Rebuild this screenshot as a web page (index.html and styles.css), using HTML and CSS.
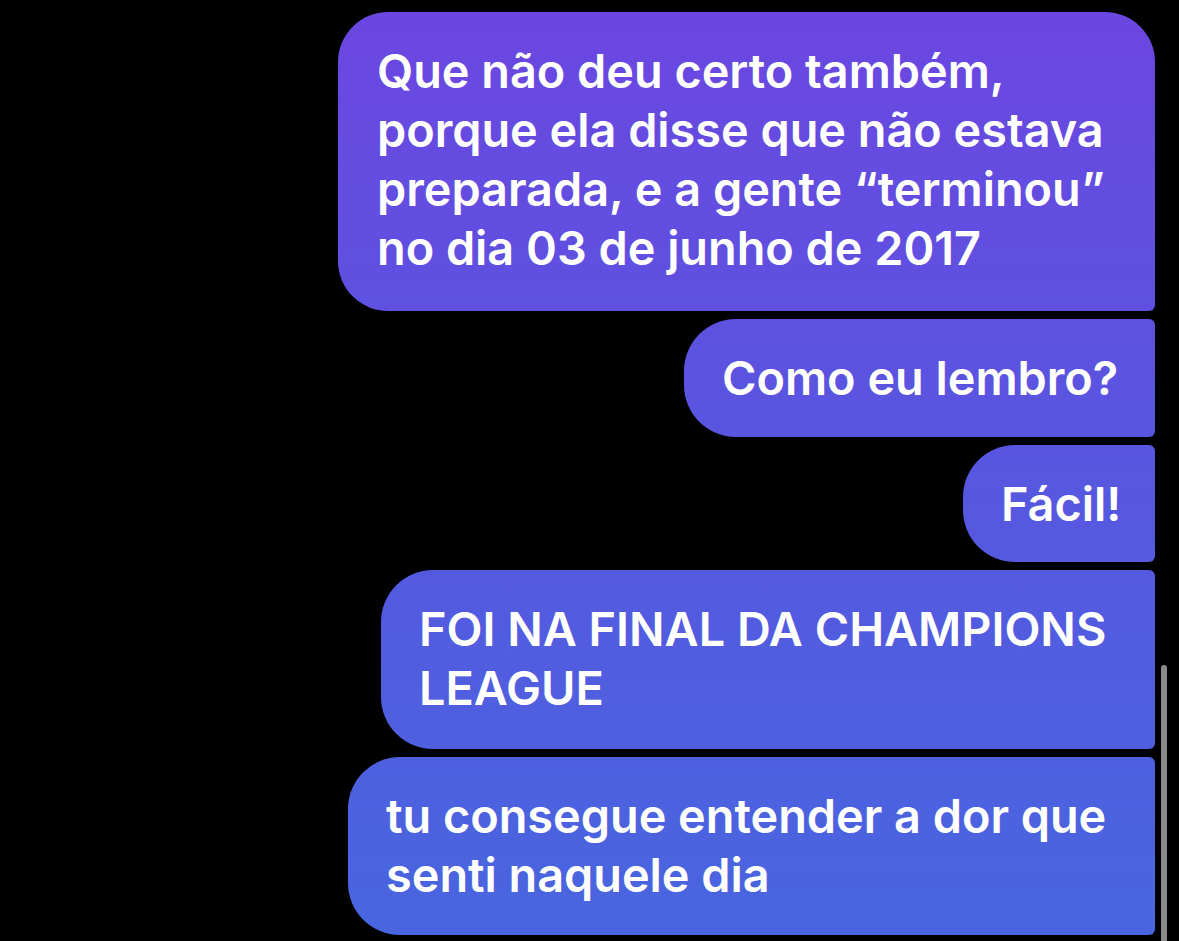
FILE: index.html
```html
<!DOCTYPE html>
<html lang="pt">
<head>
<meta charset="utf-8">
<link rel="stylesheet" href="styles.css">
</head>
<body>
<div class="thread">
  <div class="bubble b1">Que não deu certo também,<br>porque ela disse que não estava<br>preparada, e a gente “terminou”<br>no dia 03 de junho de 2017</div>
  <div class="bubble b2">Como eu lembro?</div>
  <div class="bubble b3">Fácil!</div>
  <div class="bubble b4">FOI NA FINAL DA CHAMPIONS<br>LEAGUE</div>
  <div class="bubble b5">tu consegue entender a dor que<br>senti naquele dia</div>
</div>
<div class="scrollbar"></div>
</body>
</html>
```
FILE: styles.css
```css
html, body {
  margin: 0;
  padding: 0;
  background: #000;
  height: 100%;
  overflow: hidden;
}
.thread {
  display: flex;
  flex-direction: column;
  align-items: flex-end;
  gap: 8px;
  padding: 12px 24px 0 0;
}
.bubble {
  box-sizing: border-box;
  color: #fff;
  font-family: Inter, "Noto Sans", sans-serif;
  font-weight: 600;
  font-size: 46.8px;
  line-height: 59px;
  white-space: nowrap;
  padding: 30px 38px;
  border-radius: 52px 6px 6px 52px;
  background: linear-gradient(180deg, #6c46e1 0px, #5955e0 420px, #4866df 941px);
  background-attachment: fixed;
}
.b1 { width: 817px; height: 299px; border-radius: 50px 50px 6px 50px; padding-left: 39px; }
.b2 { width: 471px; height: 118px; }
.b3 { width: 192px; height: 117px; }
.b4 { width: 774px; height: 179px; }
.b5 { width: 807px; height: 178px; }
.scrollbar {
  position: absolute;
  left: 1161px;
  top: 665px;
  width: 6px;
  height: 290px;
  border-radius: 3px;
  background: #8a8a8a;
}
```
